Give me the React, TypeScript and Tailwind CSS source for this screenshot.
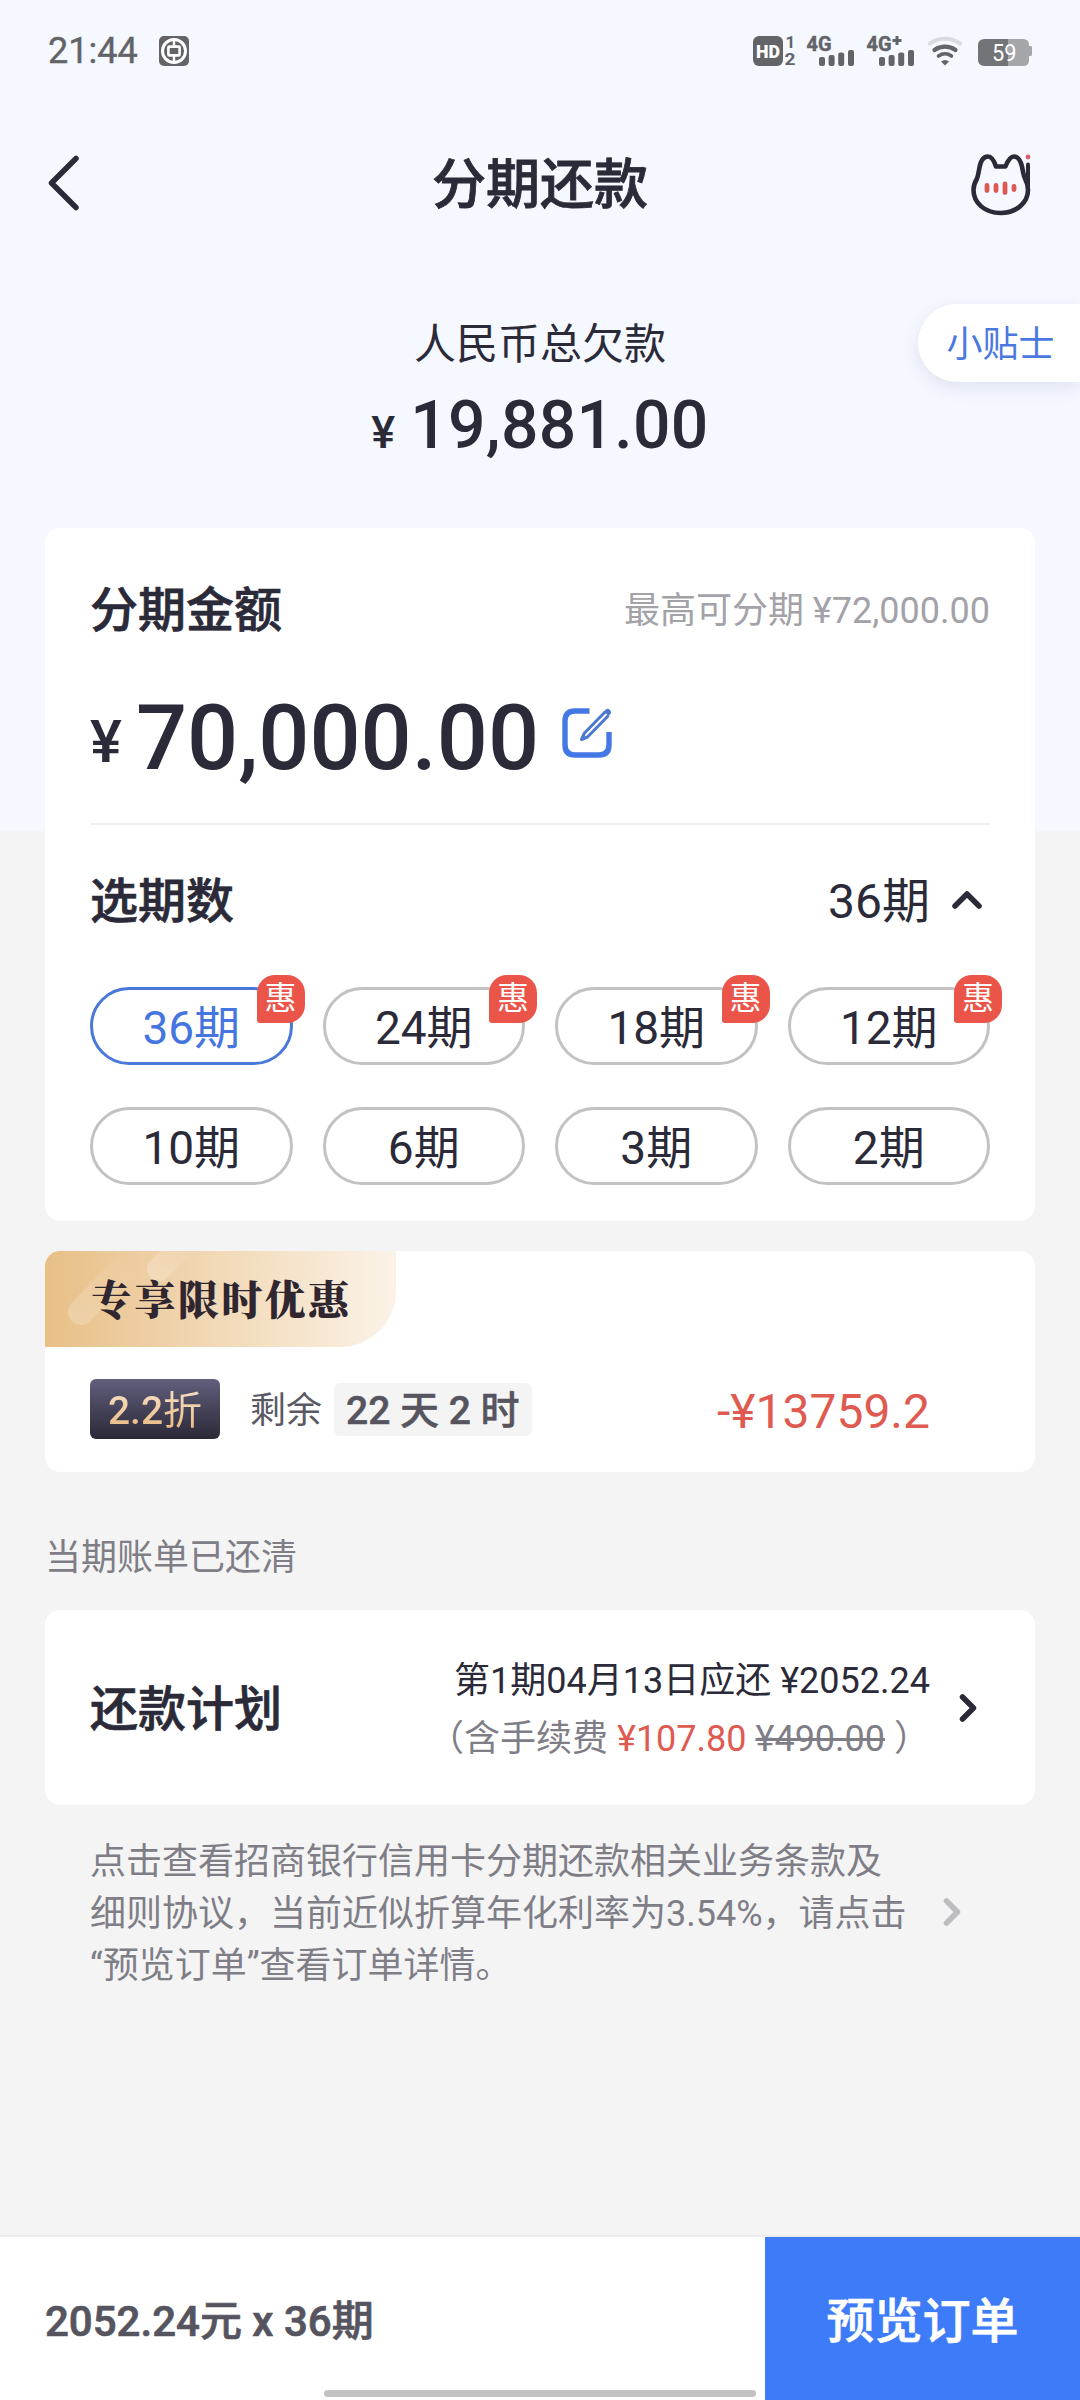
import React, { useState } from "react";

const terms = [
  { count: 36, promo: true },
  { count: 24, promo: true },
  { count: 18, promo: true },
  { count: 12, promo: true },
  { count: 10, promo: false },
  { count: 6, promo: false },
  { count: 3, promo: false },
  { count: 2, promo: false },
];

export default function App() {
  const [selected, setSelected] = useState(36);

  return (
    <div className="flex h-[2400px] w-[1080px] flex-col overflow-hidden bg-[linear-gradient(#f5f8ff_831px,#f4f4f4_831px)] font-['Roboto','Noto_Sans_CJK_SC',sans-serif] text-[#2b2a39]">
      <StatusBar />

      {/* Nav bar */}
      <header className="flex h-[162px] items-center justify-between pr-[48px] pl-[48px]">
        <button className="w-[62px]" aria-label="返回">
          <svg width="32" height="56" viewBox="0 0 32 56" fill="none">
            <path d="M28 3.5 3.500 28l24.500 24.500" stroke="#2b2a39" strokeWidth="5.5" strokeLinecap="round" strokeLinejoin="round" />
          </svg>
        </button>
        <h1 className="pt-[6px] text-[54px] leading-none font-medium [-webkit-text-stroke:0.8px]">分期还款</h1>
        <CatIcon />
      </header>

      {/* Total debt */}
      <section className="relative flex h-[264px] flex-col items-center pt-[49px]">
        <p className="text-[42px] leading-[64px]">人民币总欠款</p>
        <p className="mt-[10px] flex items-baseline font-medium">
          <span className="mr-[15px] text-[45px] leading-[78px]">¥</span>
          <span className="text-[66px] leading-[78px] tracking-[0.3px]">19,881.00</span>
        </p>
        <button className="absolute top-[40px] right-0 h-[78px] w-[162px] rounded-l-full bg-white pt-[2px] pl-[3px] text-[36px] leading-[78px] text-[#4a78e0] shadow-[0_6px_18px_rgba(40,50,90,0.1)]">
          小贴士
        </button>
      </section>

      {/* Amount and term */}
      <section className="mx-[45px] h-[693px] rounded-[15px] bg-white px-[45px]">
        <div className="flex h-[162px] items-center justify-between pt-[4px]">
          <h2 className="text-[48px] leading-none font-medium [-webkit-text-stroke:0.7px]">分期金额</h2>
          <span className="text-[36px] leading-none text-[#a2a2a8]">最高可分期 ¥72,000.00</span>
        </div>
        <div className="flex h-[135px] items-start border-b-2 border-[#eeeeee] font-medium">
          <span className="mr-[14px] pt-[17px] text-[60px] leading-[70px]">¥</span>
          <span className="pt-[3px] text-[90px] leading-[92px]">70,000.00</span>
          <EditIcon />
        </div>
        <div className="flex h-[151px] items-center justify-between pt-[2px] pr-[6px]">
          <h2 className="text-[48px] leading-none font-medium [-webkit-text-stroke:0.7px]">选期数</h2>
          <div className="flex items-center">
            <span className="text-[48px] leading-none">36期</span>
            <svg className="mb-[3px] ml-[20px]" width="34" height="24" viewBox="0 0 34 24" fill="none">
              <path d="M5 18 17 6l12 12" stroke="#2b2a39" strokeWidth="5.5" strokeLinecap="round" strokeLinejoin="round" />
            </svg>
          </div>
        </div>
        <div className="mt-[11px] grid grid-cols-4 gap-x-[30px] gap-y-[42px]">
          {terms.map((t) => (
            <button
              key={t.count}
              onClick={() => setSelected(t.count)}
              className={`relative h-[78px] rounded-full border-[3px] pt-[2px] text-[46px] leading-[72px] ${
                selected === t.count ? "border-[#4a78d8] text-[#4576e0]" : "border-[#c2c2c2]"
              }`}
            >
              {t.count}期
              {t.promo && (
                <span className="absolute -top-[15px] -right-[15px] h-[48px] w-[48px] rounded-[18px] rounded-bl-[3px] bg-[#ea5449] text-[32px] leading-[47px] text-white">
                  惠
                </span>
              )}
            </button>
          ))}
        </div>
      </section>

      {/* Promotion */}
      <section className="mx-[45px] mt-[30px] h-[221px] overflow-hidden rounded-[15px] bg-white">
        <div className="relative h-[96px] w-[351px] overflow-hidden rounded-br-[56px] bg-linear-to-r from-[#e8bf86] to-[#fbf3e8]">
          <svg className="absolute inset-0" width="351" height="96" viewBox="0 0 351 96" fill="none">
            <defs>
              <linearGradient id="streakA" gradientUnits="userSpaceOnUse" x1="30" y1="68" x2="86" y2="8">
                <stop offset="0" stopColor="#fff" stopOpacity="0.22" />
                <stop offset="1" stopColor="#fff" stopOpacity="0" />
              </linearGradient>
              <linearGradient id="streakB" gradientUnits="userSpaceOnUse" x1="106" y1="28" x2="142" y2="-8">
                <stop offset="0" stopColor="#fff" stopOpacity="0.25" />
                <stop offset="1" stopColor="#fff" stopOpacity="0" />
              </linearGradient>
            </defs>
            <path d="M36 61 96 -2" stroke="url(#streakA)" strokeWidth="26" strokeLinecap="round" />
            <path d="M114 18 140 -8" stroke="url(#streakB)" strokeWidth="24" strokeLinecap="round" />
          </svg>
          <span className="relative block pl-[46px] font-['Noto_Serif_CJK_SC','Noto_Serif_SC','Noto_Sans_CJK_SC',serif] text-[41px] leading-[93px] font-black tracking-[2.4px] whitespace-nowrap text-[#2f2630]">
            专享限时优惠
          </span>
        </div>
        <div className="mt-[32px] flex h-[60px] items-center pr-[105px] pl-[45px]">
          <span className="h-[60px] w-[130px] rounded-[6px] bg-linear-to-b from-[#625f7e] to-[#2b2937] text-center text-[39px] leading-[64px]">
            <span className="bg-linear-to-b from-[#f6e0c6] to-[#e9b77c] bg-clip-text text-transparent">
              <span className="font-medium">2.2</span>折
            </span>
          </span>
          <span className="ml-[30px] pt-[4px] text-[36px] leading-[60px] text-[#5a5963]">剩余</span>
          <span className="ml-[12px] h-[53px] rounded-[6px] bg-[#f4f4f4] px-[12px] text-[39px] leading-[56px] font-medium text-[#55545f] [-webkit-text-stroke:0.5px]">
            22 天 2 时
          </span>
          <span className="ml-auto pt-[5px] text-[48px] leading-[60px] text-[#df5a50]">-¥13759.2</span>
        </div>
      </section>

      <p className="mt-[60px] ml-[45px] text-[36px] leading-[52px] text-[#7f7e87]">当期账单已还清</p>

      {/* Repayment plan */}
      <section className="mx-[45px] mt-[26px] flex h-[195px] items-center rounded-[15px] bg-white pr-[56px] pl-[45px]">
        <h2 className="pt-[4px] text-[48px] leading-none font-medium [-webkit-text-stroke:0.7px]">还款计划</h2>
        <div className="ml-auto pt-[4px] text-right text-[36px] leading-[58px]">
          <p>第1期04月13日应还 ¥2052.24</p>
          <p className="text-[#7f7e87]">
            （含手续费 <span className="text-[#df5a50]">¥107.80</span> <span className="line-through">¥490.00</span> ）
          </p>
        </div>
        <svg className="ml-[27px]" width="22" height="34" viewBox="0 0 22 34" fill="none">
          <path d="M5.5 6 16.5 17 5.5 28" stroke="#2b2a39" strokeWidth="5.5" strokeLinecap="round" strokeLinejoin="round" />
        </svg>
      </section>

      <section className="mt-[31px] flex items-center pl-[90px]">
        <p className="w-[840px] text-[36px] leading-[52px] text-[#7f7e87]">
          点击查看招商银行信用卡分期还款相关业务条款及
          <br />
          细则协议，当前近似折算年化利率为3.54%，请点击
          <br />
          “预览订单”查看订单详情。
        </p>
        <svg className="mb-[4px] ml-[11px]" width="22" height="34" viewBox="0 0 22 34" fill="none">
          <path d="M5.5 6 16.5 17 5.5 28" stroke="#bdbdc0" strokeWidth="5.5" strokeLinecap="round" strokeLinejoin="round" />
        </svg>
      </section>

      {/* Footer */}
      <footer className="relative mt-auto flex h-[165px] border-t-2 border-[#ececec] bg-white">
        <span className="flex-1 pl-[45px] text-[42px] leading-[169px] font-medium text-[#55545f] [-webkit-text-stroke:0.7px]">
          2052.24元 x 36期
        </span>
        <button className="w-[315px] bg-[#3e7bf8] pt-[5px] text-[48px] leading-[160px] font-medium text-white [-webkit-text-stroke:0.7px]">
          预览订单
        </button>
        <div className="absolute bottom-[3px] left-[324px] h-[7px] w-[432px] rounded-full bg-[#c2c2c2]" />
      </footer>
    </div>
  );
}

function StatusBar() {
  return (
    <div className="flex h-[102px] items-center pr-[47px] pl-[48px] text-[#636468]">
      <span className="text-[36px] leading-[48px] [-webkit-text-stroke:0.4px]">21:44</span>
      <svg className="ml-[21px]" width="30" height="30" viewBox="0 0 30 30" fill="none">
        <rect width="30" height="30" rx="5" fill="#636468" />
        <circle cx="15" cy="15" r="11.5" stroke="#fff" strokeWidth="3" />
        <path d="M15 4v7M15 19v7" stroke="#fff" strokeWidth="2.4" />
        <rect x="9.4" y="10.6" width="11.2" height="8.8" rx="1" stroke="#fff" strokeWidth="2.6" />
      </svg>

      <svg className="ml-auto overflow-visible" width="280" height="32" viewBox="0 0 280 32" fill="none">
        <g fill="#636468" fontFamily="Roboto, sans-serif" fontWeight="700">
          <rect x="0" y="1" width="30" height="30" rx="6" />
          <text x="3" y="22.5" fontSize="19" fontWeight="900" fill="#fff" textLength="24" lengthAdjust="spacingAndGlyphs">HD</text>
          <text x="32.5" y="13" fontSize="17">1</text>
          <text x="31.5" y="30" fontSize="17" textLength="11" lengthAdjust="spacingAndGlyphs">2</text>
          <text x="53.5" y="16" fontSize="21" stroke="#636468" strokeWidth="0.5" textLength="25" lengthAdjust="spacingAndGlyphs">4G</text>
          <text x="113.5" y="16" fontSize="21" stroke="#636468" strokeWidth="0.5" textLength="25" lengthAdjust="spacingAndGlyphs">4G</text>
        </g>
        <path d="M139.5 5.5h9M144 1v9" stroke="#636468" strokeWidth="3" />
        <SignalBars x={66} />
        <SignalBars x={126} />
        <g strokeWidth="4.2">
          <path d="M177 8.5a26 26 0 0 1 30 0" stroke="#d9dbe1" strokeLinecap="round" />
          <path d="M181.5 15a18 18 0 0 1 21 0" stroke="#636468" strokeLinecap="round" />
          <path d="M185.5 21a11 11 0 0 1 13 0" stroke="#636468" strokeWidth="3.6" strokeLinecap="round" />
        </g>
        <path d="M188 26.5q4-3 8 0L192 30.500z" fill="#636468" />
        <path d="M255 4h15q6 0 6 6v1h2q1 0 1 2v6q0 2-1 2h-2v4q0 6-6 6h-15z" fill="#a5a6a9" />
        <path d="M231.5 4H255v27h-23.500q-6.500 0-6.500-6.500v-14Q225 4 231.500 4z" fill="#737477" />
        <text x="239" y="26" fontSize="24" fontFamily="Roboto, sans-serif" fill="#fff" textLength="24.5" lengthAdjust="spacingAndGlyphs">59</text>
      </svg>
    </div>
  );
}

function SignalBars({ x }: { x: number }) {
  return (
    <g fill="#636468">
      <rect x={x} y="22" width="6" height="9" rx="2" />
      <rect x={x + 9.6} y="20" width="6" height="11" rx="2" />
      <rect x={x + 19.2} y="17.5" width="6" height="13.5" rx="2" />
      <rect x={x + 29} y="15" width="6" height="16" rx="2" />
    </g>
  );
}

function CatIcon() {
  return (
    <svg className="mt-[2px]" width="62" height="64" viewBox="0 0 62 64" fill="none">
      <g stroke="#2b2a39" strokeWidth="4.6" strokeLinecap="round" strokeLinejoin="round">
        <path d="M26 14.500h9.500C38 8 40.500 4.500 44 4.500c4 0 6.500 4 8 10 1 5 1.500 9 3 12 1.800 3.500 3 7 3 11.500C58 51 46 61 30.500 61S3.500 51 3.500 38c0-4.500 1.500-8 3.500-11.500 1-2 1.300-5 2.300-10C10.500 9 13.500 4.500 18 4.500c4 0 6 4 8 10z" />
        <path d="M58 12.5V34" strokeWidth="4" />
      </g>
      <circle cx="58" cy="5" r="2.4" fill="#d9606a" />
      <g stroke="#dd5a54" strokeWidth="4.8" strokeLinecap="round">
        <path d="M17 33.5v5M26 33.5v5M35 32v8.500M44 34.500v3" />
      </g>
    </svg>
  );
}

function EditIcon() {
  return (
    <svg className="mt-[16px] ml-[21px]" width="54" height="54" viewBox="0 0 54 54" fill="none">
      <path d="M29.5 5H15Q5 5 5 15v24q0 10 10 10h24q10 0 10-10V26" stroke="#4478e6" strokeWidth="5.4" />
      <path d="M45.5 5.500 24.500 27l-3 6.500 6-2.500L48.500 9.500" stroke="#4c78cf" strokeWidth="3" strokeLinejoin="round" />
      <path d="M44 5.500 46 3.500Q48 2 50 4t.5 4L48.500 10z" fill="#4c78cf" />
    </svg>
  );
}
